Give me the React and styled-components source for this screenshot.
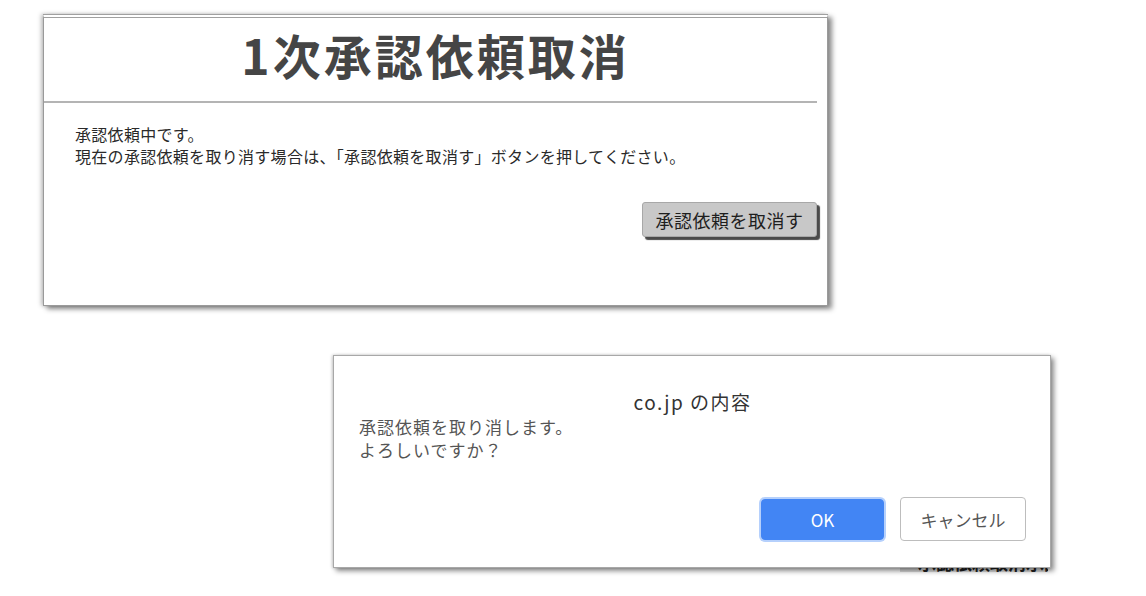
import React from 'react';
import styled, { createGlobalStyle } from 'styled-components';

const GlobalStyle = createGlobalStyle`
  html, body {
    margin: 0;
    padding: 0;
    background: #ffffff;
  }
  body {
    font-family: "Noto Sans CJK JP", "Noto Sans", sans-serif;
    color: #333;
  }
`;

const Page = styled.div`
  width: 1146px;
  height: 596px;
  overflow: hidden;
  display: flex;
  flex-direction: column;
  padding-top: 14px;
  box-sizing: border-box;
`;

// Upper panel: the cancel-request screen
const Panel = styled.section`
  margin-left: 43px;
  width: 785px;
  height: 292px;
  flex-shrink: 0;
  box-sizing: border-box;
  background: #fff;
  border: 1px solid #9a9a9a;
  border-top: 4px double #a0a0a0;
  box-shadow: 4px 3px 5px rgba(0, 0, 0, 0.45), -2px 0 4px rgba(0, 0, 0, 0.25);
  display: flex;
  flex-direction: column;
`;

const Title = styled.h1`
  margin: 0;
  height: 83px;
  padding-top: 6px;
  box-sizing: border-box;
  text-align: center;
  font-size: 48px;
  line-height: 60px;
  font-weight: 700;
  letter-spacing: 3px;
  color: #454545;
`;

const Rule = styled.div`
  height: 2px;
  background: #b4b4b4;
  margin-right: 10px;
`;

const PanelBody = styled.div`
  padding: 20px 10px 0 31px;
  display: flex;
  flex-direction: column;
`;

const Message = styled.p`
  margin: 0;
  font-size: ${props => props.$size || 16}px;
  line-height: ${props => props.$lh || 22}px;
  color: ${props => props.$color || '#2a2a2a'};
  letter-spacing: ${props => props.$ls ?? 0.3}px;
`;

const ButtonRow = styled.div`
  display: flex;
  justify-content: flex-end;
  margin-top: 35px;
`;

const CancelRequestButton = styled.button`
  width: 175px;
  height: 35px;
  padding: 0;
  background: #c8c8c8;
  border: 1px solid #a8a8a8;
  border-radius: 3px;
  box-shadow: 3px 3px 1px #4a4a4a;
  font-family: inherit;
  font-size: 18px;
  letter-spacing: 0.5px;
  color: #1e1e1e;
  cursor: pointer;
`;

// Lower: browser confirm dialog
const Dialog = styled.div`
  margin-top: 49px;
  margin-left: 333px;
  width: 718px;
  height: 213px;
  flex-shrink: 0;
  box-sizing: border-box;
  background: #fff;
  border: 1px solid #a8a8a8;
  box-shadow: 3px 3px 5px rgba(0, 0, 0, 0.45), -1px 0 3px rgba(0, 0, 0, 0.2);
  display: flex;
  flex-direction: column;
  padding: 34px 24px 26px 25px;
  position: relative;
  z-index: 1;
`;

const DialogTitle = styled.div`
  text-align: center;
  font-size: 19px;
  line-height: 24px;
  letter-spacing: 1.5px;
  color: #333;
  margin-bottom: 1px;
`;

const DialogFooter = styled.div`
  margin-top: auto;
  display: flex;
  justify-content: flex-end;
  gap: 16px;
`;

const DialogButton = styled.button`
  width: ${props => props.$primary ? '123px' : '126px'};
  height: ${props => props.$primary ? '41px' : '44px'};
  margin-top: ${props => props.$primary ? '2px' : '0'};
  border-radius: 4px;
  font-family: inherit;
  font-size: 17px;
  cursor: pointer;
  background: ${props => props.$primary ? '#4285f4' : '#fff'};
  color: ${props => props.$primary ? '#fff' : '#555'};
  border: ${props => props.$primary ? '1px solid #4285f4' : '1px solid #bdbdbd'};
  box-shadow: ${props => props.$primary ? '0 0 0 2px rgba(120, 170, 250, 0.55)' : 'none'};
`;

// bit of page text peeking out under the dialog
const PeekStrip = styled.div`
  margin-left: 900px;
  width: 148px;
  height: 4px;
  flex-shrink: 0;
  overflow: hidden;
  background: #dcdcdc;
`;

const PeekText = styled.div`
  margin-top: -15px;
  padding-left: 18px;
  font-size: 18px;
  line-height: 18px;
  font-weight: 700;
  color: #222;
  white-space: nowrap;
`;

const App = () => {
  return (
    <>
      <GlobalStyle />
      <Page>
        <Panel>
          <Title>1次承認依頼取消</Title>
          <Rule />
          <PanelBody>
            <Message>承認依頼中です。</Message>
            <Message>現在の承認依頼を取り消す場合は、「承認依頼を取消す」ボタンを押してください。</Message>
            <ButtonRow>
              <CancelRequestButton>承認依頼を取消す</CancelRequestButton>
            </ButtonRow>
          </PanelBody>
        </Panel>

        <Dialog>
          <DialogTitle>co.jp の内容</DialogTitle>
          <Message $size={17} $lh={23} $ls={1} $color="#555">承認依頼を取り消します。</Message>
          <Message $size={17} $lh={23} $ls={1} $color="#555">よろしいですか？</Message>
          <DialogFooter>
            <DialogButton $primary>OK</DialogButton>
            <DialogButton>キャンセル</DialogButton>
          </DialogFooter>
        </Dialog>
        <PeekStrip>
          <PeekText>承認依頼取消承認依頼</PeekText>
        </PeekStrip>
      </Page>
    </>
  );
};

export default App;
